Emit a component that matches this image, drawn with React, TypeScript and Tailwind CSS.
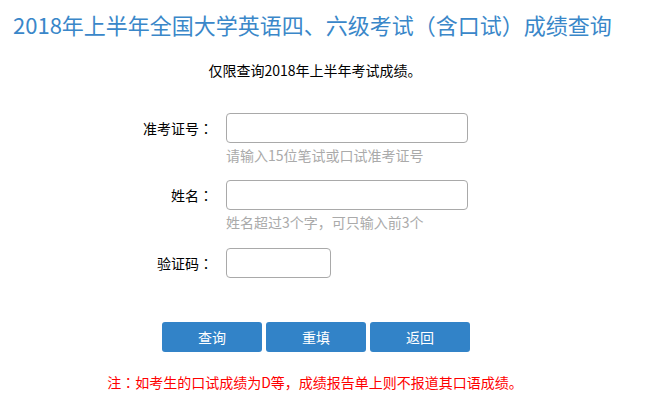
// Score query page: CET-4/6 result lookup form
import { useState } from "react"

// Full-width colon, centred in its box as in the reference font
const Colon = () => (
    <span className="font-['Noto_Sans_CJK_TC',sans-serif]">：</span>
)

const App = () => {
    // Form states
    const [ticket, setTicket] = useState("")
    const [name, setName] = useState("")
    const [code, setCode] = useState("")

    const inputClass =
        "h-[30px] rounded-[4px] border border-[#a9a9a9] bg-white px-2 text-[14px] outline-none focus:border-[#3283c8]"
    const buttonClass =
        "h-[30px] w-[100px] rounded-[3px] bg-[#3283c8] text-[14px] text-white"

    return (
        <div className="w-[630px] bg-white font-['Noto_Sans_CJK_SC','Noto_Sans',sans-serif] text-black">
            {/* Title */}
            <h1 className="pl-[13px] pt-[9px] text-[22px] leading-[30px] text-[#3a87c9]">
                2018年上半年全国大学英语四、六级考试（含口试）成绩查询
            </h1>

            {/* Subtitle */}
            <p className="mt-[21px] text-center text-[14px] leading-[20px]">
                仅限查询2018年上半年考试成绩。
            </p>

            {/* Form */}
            <form
                className="mt-[33px] flex flex-col"
                onSubmit={(e) => e.preventDefault()}
            >
                {/* Ticket number */}
                <div className="flex items-center">
                    <label className="w-[213px] text-right text-[14px] leading-[20px]">
                        准考证号<Colon />
                    </label>
                    <input
                        className={`ml-[13px] w-[242px] ${inputClass}`}
                        value={ticket}
                        onChange={(e) => setTicket(e.target.value)}
                    />
                </div>
                <p className="mt-[2px] pl-[226px] text-[14px] leading-[20px] text-[#aaaaaa]">
                    请输入15位笔试或口试准考证号
                </p>

                {/* Name */}
                <div className="mt-[15px] flex items-center">
                    <label className="w-[213px] text-right text-[14px] leading-[20px]">
                        姓名<Colon />
                    </label>
                    <input
                        className={`ml-[13px] w-[242px] ${inputClass}`}
                        value={name}
                        onChange={(e) => setName(e.target.value)}
                    />
                </div>
                <p className="mt-[2px] pl-[226px] text-[14px] leading-[20px] text-[#aaaaaa]">
                    姓名超过3个字，可只输入前3个
                </p>

                {/* Captcha */}
                <div className="mt-[16px] flex items-center">
                    <label className="w-[213px] text-right text-[14px] leading-[20px]">
                        验证码<Colon />
                    </label>
                    <input
                        className={`ml-[13px] w-[105px] ${inputClass}`}
                        value={code}
                        onChange={(e) => setCode(e.target.value)}
                    />
                </div>

                {/* Buttons */}
                <div className="mt-[44px] flex gap-[4px] pl-[162px]">
                    <button type="submit" className={buttonClass}>
                        查询
                    </button>
                    <button
                        type="button"
                        className={buttonClass}
                        onClick={() => {
                            setTicket("")
                            setName("")
                            setCode("")
                        }}
                    >
                        重填
                    </button>
                    <button type="button" className={buttonClass}>
                        返回
                    </button>
                </div>
            </form>

            {/* Note */}
            <p className="mt-[20px] text-center text-[14px] leading-[20px] text-[#ff0000]">
                注<Colon />如考生的口试成绩为D等，成绩报告单上则不报道其口语成绩。
            </p>
        </div>
    )
}

export default App
